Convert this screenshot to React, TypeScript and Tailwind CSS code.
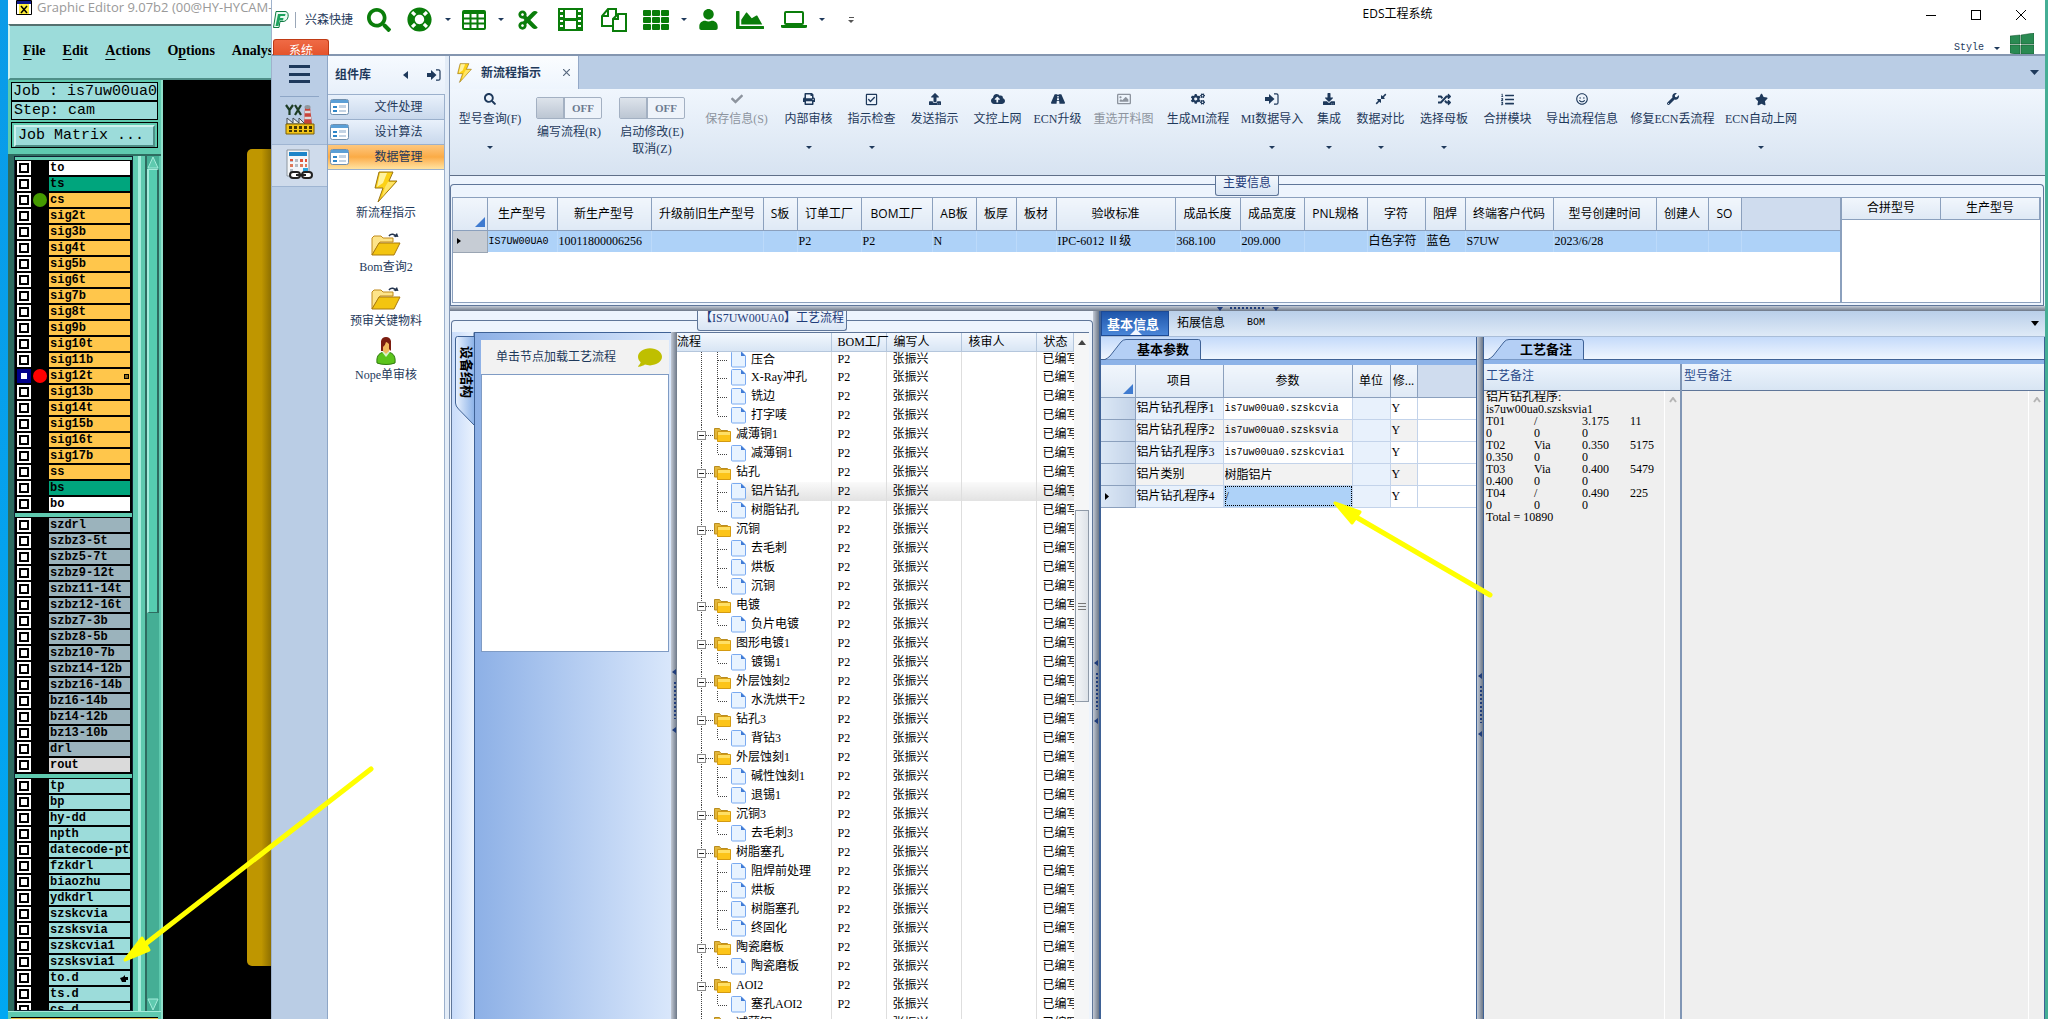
import React from 'react';
import clsx from 'clsx';
import {
  FaSearch,
  FaLifeRing,
  FaCut,
  FaUser,
  FaChartArea,
  FaCheck,
  FaPrint,
  FaRegCheckSquare,
  FaUpload,
  FaCloudUploadAlt,
  FaRoad,
  FaRegImage,
  FaCogs,
  FaDownload,
  FaCompressAlt,
  FaRandom,
  FaListOl,
  FaRegSmile,
  FaWrench,
  FaStar,
  FaComment,
} from 'react-icons/fa';

const song = "font-['Liberation_Serif','Noto_Sans_CJK_SC',serif]";
const yahei = "font-['Open_Sans','Noto_Sans_CJK_SC',sans-serif]";
const mono = "font-['Liberation_Mono','Noto_Sans_CJK_SC',monospace]";

/* ---------- icons ---------- */

const Caret = ({ className = '' }: { className?: string }) => (
  <svg viewBox="0 0 6 3" className={clsx('h-[3px] w-[6px] shrink-0', className)} fill="currentColor">
    <path d="M0 0h6L3 3z" />
  </svg>
);

const SignInIcon = () => (
  <svg viewBox="0 0 14 12" className="h-3 w-[14px]" fill="currentColor">
    <path d="M0 4h4V1l5.500 5L4 11V8H0z" />
    <path d="M9 .800h2.500q1.500 0 1.500 1.500v7.400q0 1.500-1.500 1.500H9" fill="none" stroke="currentColor" strokeWidth="1.200" />
  </svg>
);

const BoltIcon = ({ className }: { className: string }) => (
  <svg viewBox="0 0 24 32" className={className}>
    <path d="M5 1h14l-4 9h8L4 31l5-14H1z" fill="#fcd116" stroke="#9a7412" strokeWidth="1" />
    <path d="M6 2h7L9 12l-6 4z" fill="#fff3a0" />
    <path d="M14 11h7L8 26l3-10z" fill="#ffe566" />
  </svg>
);

const OpenFolderIcon = () => (
  <svg viewBox="0 0 30 24" className="h-6 w-[30px]">
    <path d="M1 22V5l2-2h7l2 2h10v4H9z" fill="#fde48a" stroke="#c08a1a" />
    <path d="M1 22L8 10h21l-6 12z" fill="#f3c511" stroke="#a97a10" />
    <path d="M18 3c2-3 6-2 7 1" fill="none" stroke="#24344f" strokeWidth="1.5" />
    <path d="M22.500 3.500l5 .5-1.500-4z" fill="#24344f" />
  </svg>
);

const PersonIcon = () => (
  <svg viewBox="0 0 22 28" className="h-7 w-[22px]">
    <path d="M2 26c-1-8 3-11 9-11s10 3 9 11c-5 2-13 2-18 0z" fill="#5cc41c" stroke="#2f7a10" />
    <path d="M7 15l4 5 4-5z" fill="#d8f4c8" />
    <path d="M7 4h8v9l-4 4-4-4z" fill="#f2b85c" />
    <path d="M6 14V4q1-4 5-4t5 4v10l-2-2V7q-2-2-3-2-1 4-3 5v4z" fill="#7c1d10" />
  </svg>
);

const FormIcon = () => (
  <svg viewBox="0 0 19 16" className="h-4 w-[19px] shrink-0">
    <rect x=".5" y=".5" width="18" height="15" rx="2" fill="#fff" stroke="#6f8fae" />
    <path d="M1 1h17v3H1z" fill="#5b9fd6" />
    <path d="M3 7h4v2H3zM3 11h4v2H3z" fill="#2f86c8" />
    <path d="M9 6h7v3H9zM9 11h7v2H9z" fill="#c3d3e4" />
  </svg>
);

const FactoryIcon = () => (
  <svg viewBox="0 0 30 31" className="h-[31px] w-[30px]">
    <path d="M1 1l3.500 5V11M8 1L4.500 6M10 11l6-10M10 1l6 10" stroke="#1d3c24" strokeWidth="2.200" fill="none" />
    <path d="M19 20l1-17h5l2 17z" fill="#c9433a" />
    <path d="M20 8h5.500M19.500 14h6.500" stroke="#dcdcdc" strokeWidth="2.500" />
    <ellipse cx="22.500" cy="3" rx="3" ry="2" fill="#8f979e" />
    <path d="M2 20v-6l6 5v-5l6 5v-5l6 6z" fill="#e8ecef" stroke="#444c54" />
    <path d="M1 20h28v10H1z" fill="#f3c417" stroke="#7b610b" />
    <path d="M4 22h3v3H4zM9 22h3v3H9zM14 22h3v3h-3zM19 22h3v3h-3zM24 22h3v3h-3zM4 26h3v2H4zM9 26h3v2H9zM14 26h3v2h-3zM19 26h3v2h-3zM24 26h3v2h-3z" fill="#453807" />
  </svg>
);

const CalcIcon = () => (
  <svg viewBox="0 0 29 31" className="h-[31px] w-[29px]">
    <path d="M2 1h22v26H2z" fill="#f4f6f8" stroke="#8a949e" />
    <path d="M4 3h18v4H4z" fill="#1d84c8" />
    <path d="M5 10h3v3H5zM10 10h3v3h-3zM10 15h3v3h-3zM5 20h3v3H5z" fill="#b4bcc4" />
    <path d="M5 10h3v2H5zM15 10h3v3h-3zM20 10h2v3h-2z" fill="#e0533a" />
    <path d="M5 15h3v3H5zM15 15h3v3h-3zM20 15h2v3h-2z" fill="#e07a5a" />
    <path d="M18 19h5v4h-5z" fill="#2aa5e0" />
    <rect x="5" y="23" width="10" height="6" rx="3" fill="#fff" stroke="#222" strokeWidth="2" />
    <rect x="17" y="23" width="10" height="6" rx="3" fill="#fff" stroke="#222" strokeWidth="2" />
    <path d="M11 26h10" stroke="#222" strokeWidth="2" />
  </svg>
);

const LogoIcon = () => (
  <svg viewBox="0 0 16 17" className="h-[17px] w-4">
    <path d="M3 .5h9c5 0 4 10-2 10H7l-1 6H.5z" fill="#e9fbf1" stroke="#0f7a43" />
    <path d="M5 3h7.500l-.5 2H7.500L7 7h3.500l-.5 2.500H6.500L5.500 15H2.500z" fill="#1da35e" />
  </svg>
);

const FolderIcon = () => (
  <svg viewBox="0 0 17 15" className="h-[15px] w-[17px] shrink-0">
    <path d="M.5 12V1.500h5l1.500 2h6.500V12z" fill="#e2b63a" stroke="#b98d20" />
    <path d="M3.500 4.500h13v10h-13z" fill="#fcc419" stroke="#d39a12" />
    <path d="M4 5h12v3H4z" fill="#ffe066" />
  </svg>
);

const DocIcon = () => (
  <svg viewBox="0 0 15 17" className="h-[17px] w-[15px] shrink-0">
    <path d="M.5 1.500q0-1 1-1H10l4.500 4.500v10q0 1-1 1h-12q-1 0-1-1z" fill="#e8f3ff" stroke="#7aaaf0" />
    <path d="M10 .5V5h4.500z" fill="#3f7bd6" />
  </svg>
);

const TableIcon = () => (
  <svg viewBox="0 0 24 20" className="h-5 w-6">
    <rect x="1" y="1" width="22" height="18" rx="1" fill="#fff" stroke="#0a7d0a" strokeWidth="2" />
    <path d="M1 3h22M1 8.500h22M1 13.500h22M8.500 1v18M15.500 1v18" stroke="#0a7d0a" strokeWidth="2" />
  </svg>
);

const TilesIcon = () => (
  <svg viewBox="0 0 26 20" className="h-5 w-[26px]">
    <path d="M4.500 3h0M13 3h0M21.500 3h0" stroke="none" />
    <g fill="#0a7d0a">
      <rect width="8" height="6" rx="1" />
      <rect x="9" width="8" height="6" rx="1" />
      <rect x="18" width="8" height="6" rx="1" />
      <rect y="7" width="8" height="6" rx="1" />
      <rect x="9" y="7" width="8" height="6" rx="1" />
      <rect x="18" y="7" width="8" height="6" rx="1" />
      <rect y="14" width="8" height="6" rx="1" />
      <rect x="9" y="14" width="8" height="6" rx="1" />
      <rect x="18" y="14" width="8" height="6" rx="1" />
    </g>
  </svg>
);

const FilmIcon = () => (
  <svg viewBox="0 0 27 23" className="h-[23px] w-[27px]">
    <path fillRule="evenodd" fill="#0a7d0a" d="M1 0h25v23H1zM8 2v8h11V2zM8 13v8h11v-8zM3 2v2h3V2zM3 7v2h3V7zM3 12v2h3v-2zM3 17v2h3v-2zM21 2v2h3V2zM21 7v2h3V7zM21 12v2h3v-2zM21 17v2h3v-2z" />
  </svg>
);

const CopyIcon = () => (
  <svg viewBox="0 0 26 24" className="h-6 w-[26px]" fill="#fff" stroke="#0a7d0a" strokeWidth="2">
    <path d="M7 1h8v17H1V8zM7 1v7H1" />
    <path d="M17 6h8v17H12V11zM17 6v5h-5" />
  </svg>
);

const LaptopIcon = () => (
  <svg viewBox="0 0 26 18" className="h-[18px] w-[26px]">
    <rect x="4" y="1" width="18" height="12" rx="1" fill="#fff" stroke="#0a7d0a" strokeWidth="2" />
    <path d="M0 14h26v2q0 1-2 1H2q-2 0-2-1z" fill="#0a7d0a" />
  </svg>
);

const CornerIcon = () => (
  <svg viewBox="0 0 10 10" className="ml-auto mr-[2px] h-[10px] w-[10px]">
    <path d="M10 0v10H0z" fill="#3f7bd0" />
  </svg>
);

/* ---------- data ---------- */

const boardLayers = [
  'to', 'ts', 'cs', 'sig2t', 'sig3b', 'sig4t', 'sig5b', 'sig6t', 'sig7b', 'sig8t', 'sig9b',
  'sig10t', 'sig11b', 'sig12t', 'sig13b', 'sig14t', 'sig15b', 'sig16t', 'sig17b', 'ss', 'bs', 'bo',
];
const drillLayers = [
  'szdrl', 'szbz3-5t', 'szbz5-7t', 'szbz9-12t', 'szbz11-14t', 'szbz12-16t', 'szbz7-3b', 'szbz8-5b',
  'szbz10-7b', 'szbz14-12b', 'szbz16-14b', 'bz16-14b', 'bz14-12b', 'bz13-10b', 'drl', 'rout',
];
const miscLayers = [
  'tp', 'bp', 'hy-dd', 'npth', 'datecode-ptd', 'fzkdrl', 'biaozhu', 'ydkdrl',
  'szskcvia', 'szsksvia', 'szskcvia1', 'szsksvia1', 'to.d', 'ts.d', 'cs.d',
];

const layerColor = (name: string) => {
  if (name === 'to' || name === 'bo') return 'bg-white';
  if (name === 'ts' || name === 'bs') return 'bg-[#00a57d]';
  if (name === 'rout') return 'bg-[#dadada]';
  if (boardLayers.includes(name)) return 'bg-[#ffc64b]';
  if (drillLayers.includes(name)) return 'bg-[#9bb3bc]';
  return 'bg-[#9cdcda]';
};

type Tool = {
  label: string;
  width: string;
  icon: React.ReactNode;
  menu?: boolean;
  disabled?: boolean;
};

const tools: Tool[] = [
  { label: '保存信息(S)', width: 'w-[81px]', icon: <FaCheck size={12} />, disabled: true },
  { label: '内部审核', width: 'w-[63px]', icon: <FaPrint size={12} />, menu: true },
  { label: '指示检查', width: 'w-[63px]', icon: <FaRegCheckSquare size={13} />, menu: true },
  { label: '发送指示', width: 'w-[63px]', icon: <FaUpload size={12} /> },
  { label: '文控上网', width: 'w-[63px]', icon: <FaCloudUploadAlt size={14} /> },
  { label: 'ECN升级', width: 'w-[57px]', icon: <FaRoad size={14} /> },
  { label: '重选开料图', width: 'w-[75px]', icon: <FaRegImage size={14} />, disabled: true },
  { label: '生成MI流程', width: 'w-[74px]', icon: <FaCogs size={14} /> },
  { label: 'MI数据导入', width: 'w-[74px]', icon: <SignInIcon />, menu: true },
  { label: '集成', width: 'w-[40px]', icon: <FaDownload size={12} />, menu: true },
  { label: '数据对比', width: 'w-[63px]', icon: <FaCompressAlt size={12} />, menu: true },
  { label: '选择母板', width: 'w-[64px]', icon: <FaRandom size={13} />, menu: true },
  { label: '合拼模块', width: 'w-[63px]', icon: <FaListOl size={13} /> },
  { label: '导出流程信息', width: 'w-[86px]', icon: <FaRegSmile size={12} /> },
  { label: '修复ECN丢流程', width: 'w-[95px]', icon: <FaWrench size={12} /> },
  { label: 'ECN自动上网', width: 'w-[82px]', icon: <FaStar size={13} />, menu: true },
];

const mainColumns: [string, string, string][] = [
  ['生产型号', 'w-[70px]', 'IS7UW00UA0'],
  ['新生产型号', 'w-[94px]', '10011800006256'],
  ['升级前旧生产型号', 'w-[112px]', ''],
  ['S板', 'w-[34px]', ''],
  ['订单工厂', 'w-[64px]', 'P2'],
  ['BOM工厂', 'w-[71px]', 'P2'],
  ['AB板', 'w-[44px]', 'N'],
  ['板厚', 'w-[40px]', ''],
  ['板材', 'w-[40px]', ''],
  ['验收标准', 'w-[119px]', 'IPC-6012 Ⅱ级'],
  ['成品长度', 'w-[65px]', '368.100'],
  ['成品宽度', 'w-[64px]', '209.000'],
  ['PNL规格', 'w-[63px]', ''],
  ['字符', 'w-[58px]', '白色字符'],
  ['阻焊', 'w-[40px]', '蓝色'],
  ['终端客户代码', 'w-[88px]', 'S7UW'],
  ['型号创建时间', 'w-[103px]', '2023/6/28'],
  ['创建人', 'w-[52px]', ''],
  ['SO', 'w-[33px]', ''],
];

// leading "+" marks a folder row
const flow = [
  '压合', 'X-Ray冲孔', '铣边', '打字唛',
  '+减薄铜1', '减薄铜1',
  '+钻孔', '铝片钻孔', '树脂钻孔',
  '+沉铜', '去毛刺', '烘板', '沉铜',
  '+电镀', '负片电镀',
  '+图形电镀1', '镀锡1',
  '+外层蚀刻2', '水洗烘干2',
  '+钻孔3', '背钻3',
  '+外层蚀刻1', '碱性蚀刻1', '退锡1',
  '+沉铜3', '去毛刺3',
  '+树脂塞孔', '阻焊前处理', '烘板', '树脂塞孔', '终固化',
  '+陶瓷磨板', '陶瓷磨板',
  '+AOI2', '塞孔AOI2',
  '+减薄铜',
];

const params = [
  ['铝片钻孔程序1', 'is7uw00ua0.szskcvia'],
  ['铝片钻孔程序2', 'is7uw00ua0.szsksvia'],
  ['铝片钻孔程序3', 'is7uw00ua0.szskcvia1'],
  ['铝片类别', '树脂铝片'],
  ['铝片钻孔程序4', '/'],
];

const noteText = [
  '铝片钻孔程序:',
  'is7uw00ua0.szsksvia1',
  'T01\t/\t3.175\t11',
  '0\t0\t0',
  'T02\tVia\t0.350\t5175',
  '0.350\t0\t0',
  'T03\tVia\t0.400\t5479',
  '0.400\t0\t0',
  'T04\t/\t0.490\t225',
  '0\t0\t0',
  'Total = 10890',
].join('\n');

/* ---------- Graphic Editor (left window) ---------- */

const LayerGroup = ({ names }: { names: string[] }) => (
  <div className="shrink-0 bg-black pl-[2px] pr-[2px] pt-[1px]">
    {names.map((name) => (
      <label key={name} className="flex h-4 gap-[2px]">
        <input
          type="checkbox"
          className={clsx(
            'h-[14px] w-[14px] shrink-0 appearance-none border-2 bg-white',
            name === 'sig12t'
              ? 'border-[#00008b] shadow-[inset_0_0_0_2px_#00008b]'
              : 'border-white shadow-[inset_0_0_0_2px_#000]'
          )}
        />
        <span
          className={clsx(
            'h-[14px] w-[14px] shrink-0 rounded-full',
            name === 'cs' && 'bg-[#459a00]',
            name === 'sig12t' && 'bg-[#ff0000]'
          )}
        />
        <span
          className={clsx(
            mono,
            'relative h-[14px] w-[81px] overflow-hidden whitespace-nowrap pl-[1px] text-[12px] font-bold leading-[14px] text-black',
            layerColor(name)
          )}
        >
          {name}
          {name === 'sig12t' && (
            <span className="absolute right-[1px] top-[5px] h-[5px] w-[5px] border border-black bg-[#8a6a20]" />
          )}
          {name === 'to.d' && (
            <svg viewBox="0 0 8 7" className="absolute right-[2px] top-[4px] h-[7px] w-2">
              <path d="M0 3l3-1 2-2v2h3v3H6v2H2z" />
            </svg>
          )}
        </span>
      </label>
    ))}
  </div>
);

const GraphicEditor = () => (
  <section className="flex w-[263px] shrink-0 flex-col overflow-hidden bg-black">
    <div className={clsx(yahei, 'flex h-6 shrink-0 items-center gap-[5px] bg-white pb-[8px] pl-2 text-[13px] text-[#999]')}>
      <svg viewBox="0 0 16 16" className="h-4 w-4 shrink-0">
        <path d="M.5.500h15v14H.5z" fill="#fff" stroke="#000" />
        <path d="M1 1h14v3H1z" fill="#111a8a" />
        <path d="M3 4h10v10H3z" fill="#ffef3a" />
        <path d="M5 6l6 7M11 6l-6 7" stroke="#000" strokeWidth="1.500" />
      </svg>
      <span className="whitespace-nowrap">Graphic Editor 9.07b2 (00@HY-HYCAM-P</span>
    </div>
    <nav
      className="flex h-[56px] shrink-0 items-center gap-[17px] whitespace-nowrap border-2 border-r-0 border-[#cdf1ee] border-b-[#4f8f88] border-t-[#55706f] bg-[#9cdcda] pb-[3px] pl-[13px] font-['Liberation_Serif',serif] text-[14px] font-bold text-black"
    >
      {['File', 'Edit', 'Actions', 'Options', 'Analysis'].map((m) => (
        <button key={m}>
          {m === 'Options' ? (
            <>
              O<span className="underline underline-offset-4">p</span>tions
            </>
          ) : m === 'Analysis' ? (
            m
          ) : (
            <>
              <span className="underline underline-offset-4">{m[0]}</span>
              {m.slice(1)}
            </>
          )}
        </button>
      ))}
    </nav>
    <div className="flex min-h-0 flex-1">
      <div className="flex w-[155px] shrink-0 flex-col border-r-2 border-[#8fe0cb] bg-[#5fcaaf] text-black">
        <div className={clsx(mono, 'mx-[3px] mt-[2px] shrink-0 text-[15px] font-medium')}>
          <div className="h-[19px] whitespace-pre border border-black bg-[#9cdcda] pl-[1px] leading-[17px]">Job : is7uw00ua0</div>
          <div className="h-[19px] whitespace-pre border border-black bg-[#9cdcda] pl-[2px] leading-[17px]">Step: cam</div>
          <button className="mt-[2px] block h-[26px] w-full border border-black bg-[#5fcaaf] p-[2px]">
            <span className="block whitespace-pre border-2 border-[#cdf1ee] border-b-[#4f8f88] border-r-[#4f8f88] bg-[#9cdcda] pl-[2px] text-left leading-[18px]">
              Job Matrix ...
            </span>
          </button>
        </div>
        <div className="mt-[6px] flex min-h-0 flex-1 border-t-2 border-[#2e6c60]">
          <div className="w-[6px] bg-[#2e6c60]" />
          <div className="flex w-[119px] flex-col gap-[4px] overflow-hidden border border-[#123] bg-[#5fcaaf] pt-[3px]">
            <LayerGroup names={boardLayers} />
            <LayerGroup names={drillLayers} />
            <LayerGroup names={miscLayers} />
          </div>
          <div className="ml-[5px] w-[3px] bg-[#a5ecdb]" />
          <div className="ml-[4px] flex w-[14px] flex-col items-center border-l-2 border-[#2e6c60] bg-[#45ae95]">
            <svg viewBox="0 0 12 13" className="h-[13px] w-3">
              <path d="M6 1l5 11H1z" fill="#5fcaaf" stroke="#a5ecdb" />
            </svg>
            <div className="h-[444px] w-full shrink-0 border-l-2 border-r-2 border-t border-b border-[#a5ecdb] border-b-[#2e6c60] border-r-[#2e6c60] bg-[#56cdb0]" />
            <svg viewBox="0 0 12 13" className="mt-auto h-[13px] w-3">
              <path d="M1 1h10L6 12z" fill="#5fcaaf" stroke="#a5ecdb" />
            </svg>
          </div>
        </div>
        <div className="h-[6px] shrink-0 border-t border-[#a5ecdb]" />
        <div className="mx-[3px] h-[2px] shrink-0 border-t border-black bg-[#e8c64b]" />
      </div>
      <div className="flex flex-1 justify-end pb-[53px] pt-[69px]">
        <div className="w-6 rounded-l-[5px] bg-linear-to-r from-[#bf9600] from-60% to-[#8f7000]" />
      </div>
    </div>
  </section>
);

/* ---------- EDS window ---------- */

const TitleBar = () => (
  <header className="flex h-[56px] shrink-0 flex-col border-b-2 border-[#8496b0] bg-white">
    <div className="flex h-[39px] items-start">
      <div className="flex h-[39px] items-center pl-[1px] text-[#0a7d0a]">
        <LogoIcon />
        <span className="ml-[6px] h-4 w-px bg-[#9aa7b8]" />
        <span className={clsx(song, 'ml-[9px] text-[12px] text-[#1e395b]')}>兴森快捷</span>
        <button aria-label="search" className="ml-[14px]"><FaSearch size={24} /></button>
        <button aria-label="help" className="ml-[16px]"><FaLifeRing size={25} /></button>
        <Caret className="ml-[13px] text-[#1e395b]" />
        <button aria-label="grid" className="ml-[11px]"><TableIcon /></button>
        <Caret className="ml-[12px] text-[#1e395b]" />
        <button aria-label="cut" className="ml-[13px]"><FaCut size={22} className="-scale-x-100 rotate-180" /></button>
        <button aria-label="film" className="ml-[18px]"><FilmIcon /></button>
        <button aria-label="copy" className="ml-[17px]"><CopyIcon /></button>
        <button aria-label="tiles" className="ml-[16px]"><TilesIcon /></button>
        <Caret className="ml-[12px] text-[#1e395b]" />
        <button aria-label="user" className="ml-[11px]"><FaUser size={21} /></button>
        <button aria-label="chart" className="ml-[17px]"><FaChartArea size={28} preserveAspectRatio="none" className="h-[24px]" /></button>
        <button aria-label="laptop" className="ml-[17px]"><LaptopIcon /></button>
        <Caret className="ml-[12px] text-[#1e395b]" />
        <span className="ml-[23px] flex flex-col items-center gap-[2px] text-[#555]">
          <span className="h-px w-[5px] bg-[#555]" />
          <Caret />
        </span>
      </div>
      <h1 className={clsx(yahei, 'mt-[5px] flex-1 pl-[15px] text-center text-[12px] leading-[18px] text-black')}>EDS工程系统</h1>
      <div className="flex items-center gap-[35px] pr-[19px] pt-[10px] text-black">
        <button aria-label="minimize" className="flex h-[10px] w-[10px] items-center"><span className="h-px w-full bg-black" /></button>
        <button aria-label="maximize" className="h-[10px] w-[10px] border border-black" />
        <button aria-label="close">
          <svg viewBox="0 0 10 10" className="h-[10px] w-[10px]" stroke="#000"><path d="M0 0l10 10M10 0L0 10" /></svg>
        </button>
      </div>
    </div>
    <div className="flex h-[15px] items-start">
      <button className={clsx(song, 'ml-[1px] h-[16px] w-[56px] overflow-hidden rounded-t-[3px] border border-b-0 border-[#c03a14] bg-linear-to-b from-[#ef6a45] to-[#e5532b] text-center text-[12px] leading-[22px] text-white')}>
        系统
      </button>
      <div className="ml-auto flex h-[15px] items-end pr-[11px] text-[#1e395b]">
        <button className={clsx(mono, 'flex h-[12px] items-center text-[10px] leading-[12px]')}>
          Style
          <Caret className="ml-[10px]" />
        </button>
        <svg viewBox="0 0 24 21" className="ml-[10px] h-[21px] w-6">
          <path d="M0 3l10-1v9H0zM11 2l13-2v11H11zM0 12h10v9H4l-4-1zM11 12h13v9H11z" fill="#2a8a52" stroke="#134d2b" strokeWidth=".5" />
        </svg>
      </div>
    </div>
  </header>
);

const Rail = () => (
  <nav className="w-[56px] shrink-0 border-r border-[#8ea6c6] bg-[#bacde5]">
    <button aria-label="menu" className="mx-auto mt-[9px] flex h-[18px] w-[21px] flex-col justify-between">
      <span className="h-[3px] w-full bg-[#1e395b]" />
      <span className="h-[3px] w-full bg-[#1e395b]" />
      <span className="h-[3px] w-full bg-[#1e395b]" />
    </button>
    <div className="mx-2 mt-[13px] border-t border-[#8ea6c6]" />
    <button aria-label="YX" className="flex h-[47px] w-full items-center justify-center pb-[2px]"><FactoryIcon /></button>
    <button aria-label="tools" className="flex h-[43px] w-full items-center justify-center border-y border-[#9fb5d2] bg-[#cfdbeb] pb-[2px]"><CalcIcon /></button>
  </nav>
);

const Library = () => {
  const groups = ['文件处理', '设计算法', '数据管理'];
  const items = [
    { label: '新流程指示', icon: <BoltIcon className="h-8 w-6" /> },
    { label: 'Bom查询2', icon: <OpenFolderIcon /> },
    { label: '预审关键物料', icon: <OpenFolderIcon /> },
    { label: 'Nope单审核', icon: <PersonIcon /> },
  ];
  return (
    <aside className={clsx(song, 'flex w-[122px] shrink-0 flex-col border-r border-[#8296b4] bg-[#e3ecf7] pr-[4px] text-[12px] text-[#1e395b]')}>
      <div className="flex h-[38px] items-center bg-linear-to-b from-[#f6faff] to-[#e8f0fa] pl-[7px] font-bold">
        组件库
        <svg viewBox="0 0 5 8" className="ml-auto mr-[19px] h-2 w-[5px]"><path d="M5 0v8L0 4z" fill="#1e395b" /></svg>
        <SignInIcon />
        <span className="w-[4px]" />
      </div>
      {groups.map((g) => (
        <button
          key={g}
          className={clsx(
            'flex h-[25px] shrink-0 items-center border-t border-r border-[#9bb0cc] pl-[2px]',
            g === '数据管理'
              ? 'bg-linear-to-b from-[#fdc77d] via-[#fbab45] to-[#ffe3a0]'
              : 'bg-linear-to-b from-[#e9f1fb] to-[#c9d8ec]'
          )}
        >
          <FormIcon />
          <span className="flex-1 pl-1 text-center">{g}</span>
        </button>
      ))}
      <div className="flex flex-1 flex-col border-r border-[#9bb0cc] border-t bg-white">
        {items.map((it) => (
          <button key={it.label} className="flex h-[54px] flex-col items-center justify-end pb-[3px]">
            {it.icon}
            <span className="mt-[2px] leading-[16px]">{it.label}</span>
          </button>
        ))}
      </div>
    </aside>
  );
};

const ToggleTool = ({ label, extra, width }: { label: string; extra?: string; width: string }) => (
  <label className={clsx('flex shrink-0 flex-col items-center pt-2', width)}>
    <input type="checkbox" className="peer sr-only" />
    <span className="flex h-[22px] w-[66px] rounded-[2px] border border-[#a3b0c2] bg-[#eef3fa]">
      <span className="w-[28px] border-r-2 border-[#a3b0c2] bg-linear-to-b from-[#dde3eb] to-[#bcc6d3]" />
      <span className="flex-1 text-center text-[11px] font-bold leading-[20px] text-[#6c7a90]">OFF</span>
    </span>
    <span className="mt-[5px] leading-[17px]">{label}</span>
    {extra && <span className="leading-[17px]">{extra}</span>}
  </label>
);

const ToolButton = ({ label, width, icon, menu, disabled }: Tool) => (
  <button
    disabled={disabled}
    className={clsx('flex shrink-0 flex-col items-center pt-[3px]', width, disabled && 'text-[#8d949e]')}
  >
    <span className="flex h-[14px] items-center">{icon}</span>
    <span className="mt-[5px] whitespace-nowrap leading-[17px]">{label}</span>
    {menu && <Caret className="mt-[18px]" />}
  </button>
);

const Toolbar = () => (
  <div className={clsx(song, 'flex h-[87px] shrink-0 items-start border-b border-[#5f6f88] bg-linear-to-b from-[#f0f6fd] to-[#d7e3f1] text-[12px] text-[#1e395b]')}>
    <ToolButton label="型号查询(F)" width="w-[80px]" icon={<FaSearch size={12} />} menu />
    <ToggleTool label="编写流程(R)" width="w-[78px]" />
    <ToggleTool label="启动修改(E)" extra="取消(Z)" width="w-[88px]" />
    {tools.map((t) => (
      <ToolButton key={t.label} {...t} />
    ))}
  </div>
);

const Caption = ({ children, className }: { children: React.ReactNode; className?: string }) => (
  <div className={clsx(song, 'h-[20px] rounded-b-[3px] border border-t-0 border-[#5f7699] bg-linear-to-b from-[#f2f7fd] to-[#d9e5f4] text-center text-[12px] leading-[15px] text-[#1f3c7a]', className)}>
    {children}
  </div>
);

const gridHead = 'border-r border-b border-[#8ba0bd] bg-linear-to-b from-[#f1f6fc] to-[#dfe9f5] p-0 font-normal';

const MainInfo = () => (
  <section className="flex h-[130px] shrink-0 flex-col bg-[#edf4fd] pr-[1px]">
    <div className="relative h-[20px] shrink-0">
      <div className="absolute inset-x-0 top-[8px] h-3 rounded-t-[4px] border border-b-0 border-[#5f7699]" />
      <Caption className="relative mx-auto w-[64px]">主要信息</Caption>
    </div>
    <div className="flex min-h-0 flex-1 border-b border-l border-r border-[#5f7699] pb-[2px] pl-[1px] pr-[2px] pt-[1px]">
      <div className="flex min-w-0 flex-1 border-x border-t border-b border-[#8ba0bd] bg-white">
        <div className="min-w-0 flex-1 overflow-hidden">
          <table className="w-full table-fixed border-collapse text-[12px] text-black">
            <thead className={yahei}>
              <tr className="h-8">
                <th className={clsx(gridHead, 'w-[34px] pt-4')}><CornerIcon /></th>
                {mainColumns.map(([name, width]) => (
                  <th key={name} className={clsx(gridHead, width, 'whitespace-nowrap')}>{name}</th>
                ))}
                <th className="border-b border-[#8ba0bd] bg-[#cfdcee]" />
              </tr>
            </thead>
            <tbody className={song}>
              <tr className="h-[22px] bg-[#aed2f8]">
                <td className="border-r border-b border-[#9aa5b3] bg-[#c6ccd4] pl-1">
                  <svg viewBox="0 0 4 6" className="h-[6px] w-1"><path d="M0 0v6l4-3z" /></svg>
                </td>
                {mainColumns.map(([name, , value]) => (
                  <td
                    key={name}
                    className={clsx(
                      'whitespace-nowrap border-r border-[#bcdafa] p-0 pl-[1px]',
                      value === 'IS7UW00UA0' && "font-['Liberation_Mono',monospace] text-[10px]"
                    )}
                  >
                    {value}
                  </td>
                ))}
                <td />
              </tr>
            </tbody>
          </table>
        </div>
        <div className="w-[200px] shrink-0 border-l-2 border-[#8ba0bd]">
          <table className="w-full table-fixed border-collapse text-[12px] text-black">
            <thead className={yahei}>
              <tr className="h-[21px]">
                <th className={gridHead}>合拼型号</th>
                <th className={gridHead}>生产型号</th>
              </tr>
            </thead>
          </table>
        </div>
      </div>
    </div>
  </section>
);

const Connector = ({ folder, last }: { folder: boolean; last: boolean }) =>
  folder ? (
    <svg viewBox="0 0 37 19" className="h-[19px] w-[37px] shrink-0">
      <path d="M24.500 0v19M29 10.500h8" stroke="#444" strokeDasharray="1 1" />
      <rect x="20.500" y="6.500" width="8" height="8" fill="#fff" stroke="#8a8a8a" />
      <path d="M22 10.500h5" stroke="#222" />
    </svg>
  ) : (
    <svg viewBox="0 0 54 19" className="h-[19px] w-[54px] shrink-0">
      <path d={`M24.500 0v19M40.500 0v${last ? 10 : 19}M41 10.500h9`} stroke="#444" strokeDasharray="1 1" fill="none" />
    </svg>
  );

const treeHead = 'border-r border-b border-[#b4c6dc] bg-linear-to-b from-[#f3f8fe] to-[#d8e5f4] p-0 text-left font-normal leading-[16px]';
const treeCell = 'overflow-hidden whitespace-nowrap border-r border-[#dedede] p-0 pl-[6px] leading-[15px]';

const FlowTree = () => (
  <div className={clsx(song, 'relative flex w-[412px] shrink-0 overflow-hidden border-t border-[#5f7699] bg-white text-[12px] text-black')}>
    <table className="h-0 w-[397px] table-fixed border-collapse">
      <thead>
        <tr className="h-[18px]">
          <th className={clsx(treeHead, 'w-[154px]')}>流程</th>
          <th className={clsx(treeHead, 'w-[55px] whitespace-nowrap pl-[6px]')}>BOM工厂</th>
          <th className={clsx(treeHead, 'w-[75px] pl-[7px]')}>编写人</th>
          <th className={clsx(treeHead, 'w-[75px] pl-[7px]')}>核审人</th>
          <th className={clsx(treeHead, 'pl-[7px]')}>状态</th>
        </tr>
      </thead>
      <tbody>
        {flow.map((entry, i) => {
          const folder = entry.startsWith('+');
          const next = flow[i + 1];
          const selected = entry === '铝片钻孔';
          const cell = clsx(treeCell, selected && 'bg-linear-to-b from-[#fafafa] to-[#e2e2e2]');
          return (
            <tr key={i} className={i === 0 ? 'h-[16px]' : 'h-[19px]'}>
              <td className="border-r border-[#dedede] p-0">
                <div className={clsx('flex items-center overflow-hidden whitespace-nowrap', i === 0 ? 'h-[16px]' : 'h-[19px]')}>
                  <Connector folder={folder} last={!next || next.startsWith('+')} />
                  <span className={clsx('flex h-full flex-1 items-center gap-[5px] leading-[18px]', selected && 'bg-linear-to-b from-[#fafafa] to-[#e2e2e2]')}>
                    {folder ? <FolderIcon /> : <DocIcon />}
                    {entry.replace('+', '')}
                  </span>
                </div>
              </td>
              <td className={cell}>P2</td>
              <td className={cell}>张振兴</td>
              <td className={cell} />
              <td className={clsx(cell, 'border-r-0')}>已编写</td>
            </tr>
          );
        })}
      </tbody>
    </table>
    <div className="flex flex-1 flex-col items-center bg-[#f5f6f7]">
      <svg viewBox="0 0 8 5" className="mt-[7px] h-[5px] w-2 shrink-0"><path d="M4 0l4 5H0z" fill="#444" /></svg>
      <div className="mt-[165px] flex h-[192px] w-[14px] shrink-0 flex-col items-center justify-center gap-[2px] border border-[#8f9aa8] bg-linear-to-r from-[#f4f6f8] to-[#dde2e8]">
        <span className="h-px w-2 bg-[#777]" />
        <span className="h-px w-2 bg-[#777]" />
        <span className="h-px w-2 bg-[#777]" />
      </div>
    </div>
  </div>
);

const Splitter = ({ width, grip }: { width: string; grip: string }) => (
  <div className={clsx('flex shrink-0 flex-col items-center bg-linear-to-r from-[#c3cad5] to-[#6d7888]', width)}>
    <svg viewBox="0 0 5 64" className={clsx('h-16 w-[5px]', grip)} fill="#1f3c7a">
      <path d="M4 0v6L0 3zM4 58v6l-4-3z" />
      <path d="M3 13v37" stroke="#1f3c7a" strokeWidth="2" strokeDasharray="2 2" />
    </svg>
  </div>
);

const ProcessPanel = () => (
  <section className="flex w-[643px] shrink-0 flex-col bg-[#edf4fd] pl-[1px]">
    <div className="relative h-[20px] shrink-0">
      <div className="absolute inset-x-0 top-[9px] h-3 rounded-t-[4px] border border-b-0 border-[#5f7699]" />
      <Caption className="relative mx-auto w-[150px]">【IS7UW00UA0】工艺流程</Caption>
    </div>
    <div className="flex min-h-0 flex-1 border-x border-[#5f7699] pt-[1px]">
      <div className="relative w-[22px] shrink-0 bg-linear-to-r from-[#c9dcfa] to-[#eaf2fd]">
        <svg viewBox="0 0 22 94" className="absolute left-0 top-0 h-[94px] w-[22px]">
          <defs>
            <linearGradient id="sideTab">
              <stop offset="0" stopColor="#eaf2fe" />
              <stop offset="1" stopColor="#8db3e8" />
            </linearGradient>
          </defs>
          <path d="M22 .5v4H5.500Q3.500 4.500 3.500 7v64q0 3 3 6l15.500 16" fill="url(#sideTab)" stroke="#3f6296" />
        </svg>
        <button className={clsx(song, 'relative mt-[14px] flex w-full items-center pl-[5px] text-[13px] font-bold leading-[16px] text-black [text-orientation:sideways] [writing-mode:vertical-rl]')}>
          设备结构
        </button>
      </div>
      <div className="flex w-[197px] shrink-0 flex-col border-t border-l border-[#3f6296] bg-linear-to-r from-[#8db0e6] to-[#d9e7fb] pl-[6px] pr-[2px]">
        <div className={clsx(song, 'mt-[7px] flex h-[34px] items-center bg-[#f2f2f2] pl-[15px] text-[12px] text-[#1e395b]')}>
          单击节点加载工艺流程
          <FaComment size={24} preserveAspectRatio="none" className="ml-auto mr-[7px] h-[21px] text-[#bfbf00]" />
        </div>
        <div className="h-[278px] border border-[#7f9bc4] bg-white" />
      </div>
      <Splitter width="w-[6px]" grip="mt-[337px]" />
      <FlowTree />
    </div>
  </section>
);

const SlantTab = ({ label }: { label: string }) => (
  <div className="h-[23px] shrink-0 border-b border-[#3f6296] bg-linear-to-b from-[#c4dafa] to-[#f0f6fe] pl-[4px] pt-[2px]">
    <button className={clsx(yahei, 'relative block h-[21px] w-[96px] text-[13px] font-bold leading-[21px] text-black')}>
      <svg viewBox="0 0 96 21" className="absolute inset-0 h-[21px] w-24">
        <path d="M0 20.500Q3 19 5 17L16 3Q18 .5 21 .5H93.500Q95.500.500 95.500 3V20.500" fill="#b4cff5" stroke="#3f6296" />
      </svg>
      <span className="relative pl-[20px]">{label}</span>
    </button>
  </div>
);

const ParamTable = () => (
  <table className="w-full table-fixed border-collapse text-[12px] text-black">
    <thead className={yahei}>
      <tr className="h-8">
        <th className={clsx(gridHead, 'w-[34px] pt-4')}><CornerIcon /></th>
        <th className={clsx(gridHead, 'w-[88px]')}>项目</th>
        <th className={clsx(gridHead, 'w-[129px]')}>参数</th>
        <th className={clsx(gridHead, 'w-[38px]')}>单位</th>
        <th className={clsx(gridHead, 'w-[27px] whitespace-nowrap')}>修...</th>
        <th className="border-b border-[#8ba0bd] bg-[#cfdcee]" />
      </tr>
    </thead>
    <tbody className={song}>
      {params.map(([name, value], i) => {
        const shade = i % 2 ? 'bg-[#f2f2f2]' : 'bg-white';
        const cell = 'whitespace-nowrap border-r border-b border-[#c3d3ea] p-0 pl-[1px]';
        return (
          <tr key={name} className="h-[22px]">
            <td className="border-r border-b border-[#8ba0bd] bg-linear-to-r from-[#dbe7f5] to-[#c3d3e8] pl-1">
              {i === 4 && <svg viewBox="0 0 4 7" className="h-[7px] w-1"><path d="M0 0v7l4-3.500z" /></svg>}
            </td>
            <td className={clsx(cell, i % 2 ? 'bg-[#f2f2f2]' : 'bg-[#e8f1fc]')}>{name}</td>
            <td className={clsx(cell, i === 4 ? 'bg-[#aed2f8]' : shade)}>
              <input
                aria-label={name}
                defaultValue={value}
                className={clsx(
                  'block h-[20px] w-[127px] bg-transparent outline-none',
                  value.startsWith('is7') && "font-['Liberation_Mono',monospace] text-[10px]",
                  i === 4 && 'border border-dotted border-black'
                )}
              />
            </td>
            <td className={clsx(cell, 'bg-[#e8f1fc]')} />
            <td className={clsx(cell, shade)}>Y</td>
            <td className="border-b border-[#c3d3ea] bg-white" />
          </tr>
        );
      })}
    </tbody>
  </table>
);

const NoteBox = ({ title, value, className }: { title: string; value: string; className: string }) => (
  <label className={clsx('flex flex-col', className)}>
    <span className={clsx(song, 'h-[27px] shrink-0 border-b border-[#5f7699] bg-linear-to-b from-[#eef5fd] to-[#d8e5f3] pl-[2px] text-[12px] leading-[25px] text-[#2a4a8a]')}>
      {title}
    </span>
    <span className="flex min-h-0 flex-1 bg-[#efefef]">
      <textarea
        defaultValue={value}
        className={clsx(song, 'min-w-0 flex-1 resize-none overflow-hidden whitespace-pre bg-transparent pl-[2px] text-[12px] leading-[12px] text-black outline-none [tab-size:48px]')}
      />
      <span className="w-[16px] shrink-0 border-l border-white pt-[6px]">
        <svg viewBox="0 0 8 6" className="mx-auto h-[6px] w-2" fill="none" stroke="#b5b5b5" strokeWidth="2"><path d="M1 5l3-4 3 4" /></svg>
      </span>
    </span>
  </label>
);

const DetailPanel = () => (
  <section className="flex min-w-0 flex-1 flex-col border-l-2 border-[#3f6296]">
    <div className={clsx(yahei, 'flex h-[26px] shrink-0 items-center border-b border-[#a9bdd8] bg-linear-to-b from-[#b9cfe9] to-[#dfeaf7] pr-[6px] text-[12px] text-black')}>
      <button className="relative h-full w-[68px] border border-[#1d4a94] bg-linear-to-b from-[#1f56ab] to-[#4a86d8] pr-[4px] text-[13px] font-bold leading-[20px] text-white">
        基本信息
        <svg viewBox="0 0 12 6" className="absolute bottom-0 left-[28px] h-[6px] w-3"><path d="M6 0l6 6H0z" fill="#f2f7ff" /></svg>
      </button>
      <button className="ml-[8px] pb-[2px]">拓展信息</button>
      <button className="ml-[22px] pb-[2px] font-['Liberation_Mono',monospace] text-[10px]">BOM</button>
      <svg viewBox="0 0 8 5" className="ml-auto h-[5px] w-2"><path d="M0 0h8L4 5z" /></svg>
    </div>
    <div className="flex min-h-0 flex-1">
      <div className="flex w-[376px] shrink-0 flex-col border-r border-[#3f6296] bg-white">
        <SlantTab label="基本参数" />
        <div className="h-[5px] shrink-0 bg-[#8db3e8]" />
        <ParamTable />
      </div>
      <Splitter width="w-[6px]" grip="mt-[336px]" />
      <div className="flex min-w-0 flex-1 flex-col border-x border-[#3f6296]">
        <SlantTab label="工艺备注" />
        <div className="h-[4px] shrink-0 bg-[#8db3e8]" />
        <div className="flex min-h-0 flex-1">
          <NoteBox title="工艺备注" value={noteText} className="w-[198px] shrink-0 border-r-2 border-[#8096b5]" />
          <NoteBox title="型号备注" value="" className="min-w-0 flex-1" />
        </div>
      </div>
    </div>
  </section>
);

const EdsWindow = () => (
  <main className="flex min-w-0 flex-1 flex-col border-l border-[#9fb2cc]">
    <TitleBar />
    <div className="flex min-h-0 flex-1">
      <Rail />
      <Library />
      <div className="flex min-w-0 flex-1 flex-col">
        <div className="flex h-[33px] shrink-0 items-center bg-[#bacde5] pr-[6px]">
          <div className="flex h-full w-[129px] items-center border-r border-[#94a9c8] bg-linear-to-b from-[#fbfdff] to-[#eef5fd] pl-[7px]">
            <BoltIcon className="h-[20px] w-[15px]" />
            <button className={clsx(song, 'ml-[9px] text-[12px] font-bold text-[#1e395b]')}>新流程指示</button>
            <button aria-label="close tab" className="ml-auto mr-[8px]">
              <svg viewBox="0 0 7 7" className="h-[7px] w-[7px]" stroke="#5a6a80" strokeWidth="1.200"><path d="M0 0l7 7M7 0L0 7" /></svg>
            </button>
          </div>
          <svg viewBox="0 0 9 5" className="ml-auto h-[5px] w-[9px]"><path d="M0 0h9L4.500 5z" fill="#1e395b" /></svg>
        </div>
        <Toolbar />
        <MainInfo />
        <div className="flex h-[5px] shrink-0 items-center justify-center bg-linear-to-b from-[#c3cad5] to-[#6d7888]">
          <svg viewBox="0 0 62 4" className="h-1 w-[62px]">
            <path d="M0 0h6L3 4zM56 0h6l-3 4z" fill="#1f3c7a" />
            <path d="M13 1h36" stroke="#1f3c7a" strokeWidth="2" strokeDasharray="2 2" />
          </svg>
        </div>
        <div className="flex min-h-0 flex-1">
          <ProcessPanel />
          <Splitter width="w-[6px]" grip="mt-[349px]" />
          <DetailPanel />
        </div>
      </div>
    </div>
  </main>
);

export default function App() {
  return (
    <div className="relative flex h-screen overflow-hidden bg-black">
      <div className="w-2 shrink-0 bg-linear-to-b from-[#0a9be8] to-[#00a8f3]" />
      <GraphicEditor />
      <EdsWindow />
      <div className="w-[3px] shrink-0 bg-[#45ae95]" />

      {/* hand-drawn pointers over both windows */}
      <svg className="pointer-events-none absolute left-0 top-0 h-full w-full" fill="#ff0" stroke="#ff0" strokeLinecap="round" strokeLinejoin="round">
        <path d="M371 769L144 945" strokeWidth="5" />
        <path d="M125 960l17-22 7 12z" strokeWidth="3" />
        <path d="M1490 595L1356 517" strokeWidth="5" />
        <path d="M1335 503l25 9-8 11z" strokeWidth="3" />
      </svg>
    </div>
  );
}
